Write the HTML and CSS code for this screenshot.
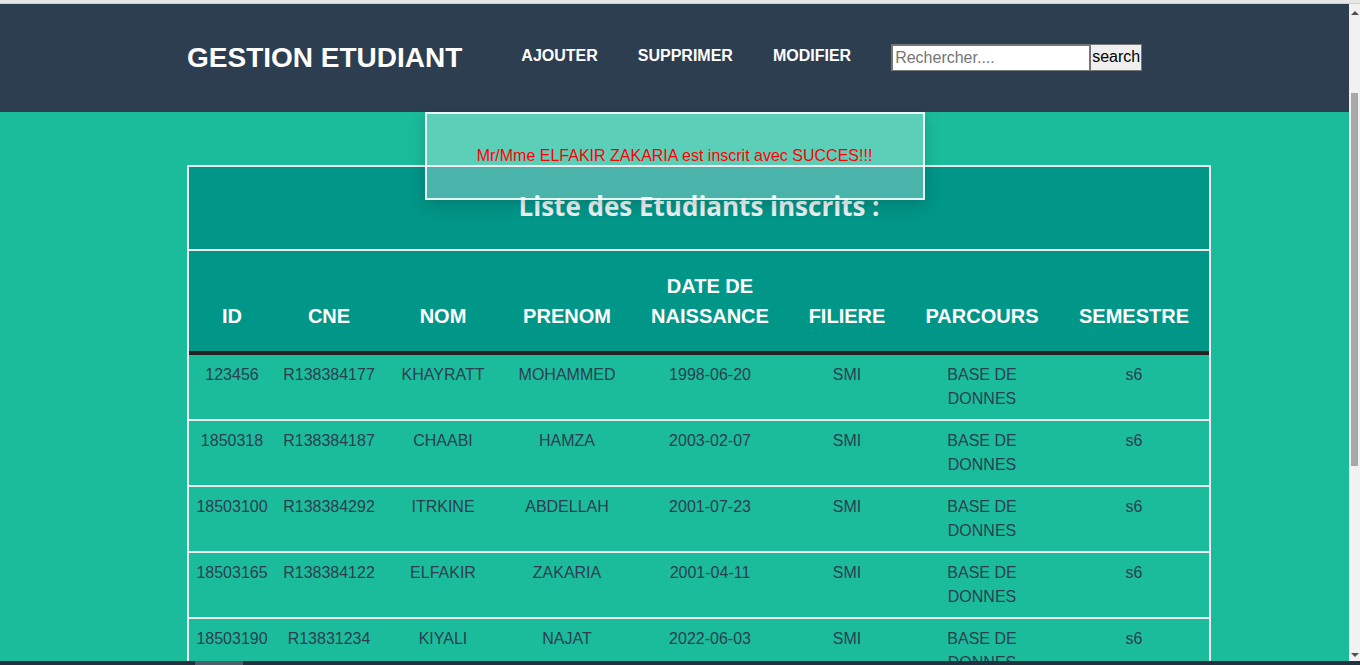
FILE: index.html
```html
<!DOCTYPE html>
<html lang="fr">
<head>
<meta charset="utf-8">
<title>Gestion Etudiant</title>
<link rel="stylesheet" href="styles.css">
</head>
<body>
<div class="topline"></div>
<div class="page">
  <header class="header">
    <div class="header-inner">
      <h1 class="logo">GESTION ETUDIANT</h1>
      <nav class="nav">
        <a href="#" class="nav-link">AJOUTER</a>
        <a href="#" class="nav-link">SUPPRIMER</a>
        <a href="#" class="nav-link">MODIFIER</a>
      </nav>
      <form class="search">
        <input class="search-input" type="text" placeholder="Rechercher....">
        <button class="search-btn" type="button">search</button>
      </form>
    </div>
  </header>
  <main class="content">
    <div class="alert">Mr/Mme ELFAKIR ZAKARIA est inscrit avec SUCCES!!!</div>
    <table class="students">
      <colgroup>
        <col class="c-id"><col class="c-cne"><col class="c-nom"><col class="c-prenom"><col class="c-date"><col class="c-fil"><col class="c-parc"><col class="c-sem">
      </colgroup>
      <thead>
        <tr><th class="caption" colspan="8">Liste des Etudiants inscrits :</th></tr>
        <tr class="head-row">
          <th>ID</th><th>CNE</th><th>NOM</th><th>PRENOM</th><th>DATE DE NAISSANCE</th><th>FILIERE</th><th>PARCOURS</th><th>SEMESTRE</th>
        </tr>
      </thead>
      <tbody>
        <tr><td>123456</td><td>R138384177</td><td>KHAYRATT</td><td>MOHAMMED</td><td>1998-06-20</td><td>SMI</td><td>BASE DE DONNES</td><td>s6</td></tr>
        <tr><td>1850318</td><td>R138384187</td><td>CHAABI</td><td>HAMZA</td><td>2003-02-07</td><td>SMI</td><td>BASE DE DONNES</td><td>s6</td></tr>
        <tr><td>18503100</td><td>R138384292</td><td>ITRKINE</td><td>ABDELLAH</td><td>2001-07-23</td><td>SMI</td><td>BASE DE DONNES</td><td>s6</td></tr>
        <tr><td>18503165</td><td>R138384122</td><td>ELFAKIR</td><td>ZAKARIA</td><td>2001-04-11</td><td>SMI</td><td>BASE DE DONNES</td><td>s6</td></tr>
        <tr><td>18503190</td><td>R13831234</td><td>KIYALI</td><td>NAJAT</td><td>2022-06-03</td><td>SMI</td><td>BASE DE DONNES</td><td>s6</td></tr>
      </tbody>
    </table>
  </main>
</div>
<div class="scrollbar">
  <span class="sb-arrow sb-up"></span>
  <span class="sb-thumb"></span>
  <span class="sb-arrow sb-down"></span>
</div>
<div class="bottombar"><span class="bottombar-seg"></span></div>
</body>
</html>
```
FILE: styles.css
```css
html {
  overflow: hidden;
}
body {
  margin: 0;
  background: #1abc9c;
  font-family: "Liberation Sans", Arial, sans-serif;
}
.topline {
  height: 3px;
  background: #e6e6e6;
  border-bottom: 1px solid #d2d2d2;
}
.page {
  width: calc(100% - 11px);
  position: relative;
}
.header {
  background: #2c3e50;
  height: 108px;
}
.header-inner {
  height: 100%;
  display: flex;
  align-items: center;
  padding-left: 187px;
}
.logo {
  margin: 0 59px 0 0;
  font-size: 28px;
  font-weight: bold;
  color: #ffffff;
  line-height: 32px;
}
.nav {
  display: flex;
  gap: 40px;
  margin-bottom: 5px;
  margin-right: 40px;
}
.nav-link {
  color: #ffffff;
  font-weight: bold;
  font-size: 16px;
  text-decoration: none;
}
.search {
  display: flex;
  margin: 0 0 2px 0;
}
.search-input {
  box-sizing: border-box;
  width: 199px;
  height: 27px;
  border: 1px solid #767676;
  border-width: 2px 1px 1px 2px;
  padding: 0 2px;
  font-family: "Liberation Sans", Arial, sans-serif;
  font-size: 16px;
  background: #fff;
}
.search-input::placeholder {
  color: #757575;
}
.search-btn {
  box-sizing: border-box;
  width: 52px;
  height: 27px;
  padding: 0;
  border: 1px solid #767676;
  background: #efefef;
  font-family: "Liberation Sans", Arial, sans-serif;
  font-size: 16px;
  color: #000;
}
.content {
  padding: 53px 0 40px 187px;
}
.alert {
  position: absolute;
  top: 108px;
  left: 50%;
  transform: translateX(-50%);
  box-sizing: border-box;
  width: 500px;
  height: 88px;
  border: 2px solid rgba(255, 255, 255, 0.85);
  background: rgba(255, 255, 255, 0.29);
  box-shadow: 0 4px 16px rgba(0, 0, 0, 0.18);
  color: #ff0000;
  font-size: 16px;
  display: flex;
  align-items: center;
  justify-content: center;
  z-index: 2;
}
.students {
  width: 1024px;
  table-layout: fixed;
  border-collapse: separate;
  border-spacing: 0;
  border: 2px solid #ececec;
  border-bottom: none;
}
.c-id { width: 86px; }
.c-cne { width: 108px; }
.c-nom { width: 120px; }
.c-prenom { width: 128px; }
.c-date { width: 158px; }
.c-fil { width: 116px; }
.c-parc { width: 154px; }
.c-sem { width: 150px; }
.caption {
  background: #009688;
  color: #ecf0f1;
  font-family: "Open Sans", "Noto Sans", sans-serif;
  font-size: 26px;
  font-weight: bold;
  height: 84px;
  padding: 0 0 5px 0;
  box-sizing: border-box;
  vertical-align: middle;
  border-bottom: 2px solid #ececec;
  line-height: 34px;
}
.head-row th {
  background: #009688;
  color: #ffffff;
  font-size: 20px;
  font-weight: bold;
  line-height: 30px;
  padding: 20px 12px 20px;
  vertical-align: bottom;
  border-bottom: 4px solid #222;
}
.students td {
  color: #2c3e50;
  font-size: 16px;
  line-height: 24px;
  text-align: center;
  vertical-align: top;
  padding: 8px 6px;
  border-bottom: 2px solid #ececec;
}
.scrollbar {
  position: fixed;
  top: 4px;
  right: 0;
  bottom: 4px;
  width: 11px;
  background: #f1f1f1;
}
.sb-thumb {
  position: absolute;
  left: 2px;
  width: 7px;
  top: 89px;
  height: 373px;
  background: #a8a8a8;
}
.sb-arrow {
  position: absolute;
  left: 2px;
  width: 0;
  height: 0;
  border-left: 4px solid transparent;
  border-right: 4px solid transparent;
}
.sb-up {
  top: 7px;
  border-bottom: 4px solid #505050;
}
.sb-down {
  bottom: 4px;
  border-top: 4px solid #505050;
}
.bottombar {
  position: fixed;
  left: 0;
  right: 0;
  bottom: 0;
  height: 4px;
  background: #22313f;
}
.bottombar-seg {
  position: absolute;
  left: 195px;
  width: 48px;
  top: 0;
  bottom: 0;
  background: #4e5f6b;
}
```
